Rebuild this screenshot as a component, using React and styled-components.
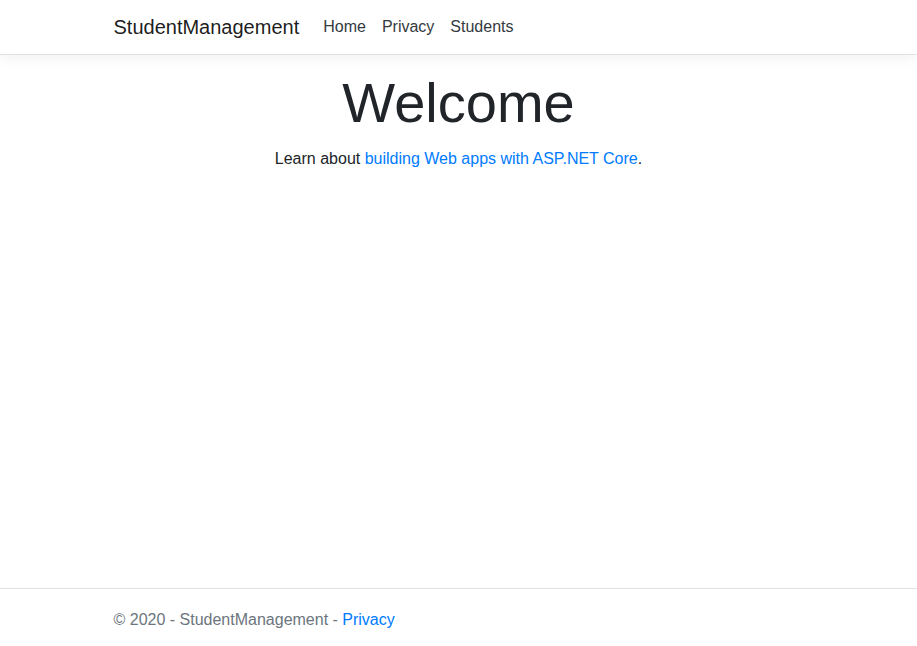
import React from 'react';
import styled, { createGlobalStyle } from 'styled-components';

const GlobalStyle = createGlobalStyle`
  html, body {
    margin: 0;
    padding: 0;
    height: 100%;
  }
  body {
    font-family: "Liberation Sans", Arial, sans-serif;
    font-size: 16px;
    line-height: 1.5;
    color: #212529;
    background: #fff;
  }
  #root {
    min-height: 100%;
  }
`;

const Page = styled.div`
  min-height: 646px;
  height: 100vh;
  display: flex;
  flex-direction: column;
`;

const Container = styled.div`
  width: 100%;
  max-width: 720px;
  margin: 0 auto;
  padding: 0 15px;
  box-sizing: border-box;
`;

const Navbar = styled.header`
  height: 55px;
  border-bottom: 1px solid #dee2e6;
  box-shadow: 0 4px 12px rgba(0, 0, 0, 0.05);
  background: #fff;
  margin-bottom: 14px;
  box-sizing: border-box;
`;

const NavInner = styled(Container)`
  height: 100%;
  display: flex;
  align-items: center;
`;

const Brand = styled.a`
  font-size: 20px;
  color: rgba(0, 0, 0, 0.9);
  text-decoration: none;
  margin-right: 16px;
  margin-top: -1px;
`;

const NavLinks = styled.nav`
  display: flex;
`;

const NavLink = styled.a`
  padding: 8px;
  color: #343a40;
  text-decoration: none;
`;

const Main = styled.main`
  flex: 1;
  text-align: center;
`;

const Title = styled.h1`
  font-size: 56px;
  font-weight: 300;
  line-height: 1.2;
  margin: 0 0 11px;
`;

const Lead = styled.p`
  margin: 0;
`;

const Link = styled.a`
  color: #007bff;
  text-decoration: none;
`;

const Footer = styled.footer`
  border-top: 1px solid #dee2e6;
  line-height: 61px;
  height: 58px;
  color: #6c757d;
  white-space: nowrap;
  box-sizing: border-box;
`;

export default function App() {
  return (
    <>
      <GlobalStyle />
      <Page>
        <Navbar>
          <NavInner>
            <Brand href="#">StudentManagement</Brand>
            <NavLinks>
              <NavLink href="#">Home</NavLink>
              <NavLink href="#">Privacy</NavLink>
              <NavLink href="#">Students</NavLink>
            </NavLinks>
          </NavInner>
        </Navbar>
        <Main>
          <Title>Welcome</Title>
          <Lead>
            Learn about <Link href="#">building Web apps with ASP.NET Core</Link>.
          </Lead>
        </Main>
        <Footer>
          <Container>
            © 2020 - StudentManagement - <Link href="#">Privacy</Link>
          </Container>
        </Footer>
      </Page>
    </>
  );
}
